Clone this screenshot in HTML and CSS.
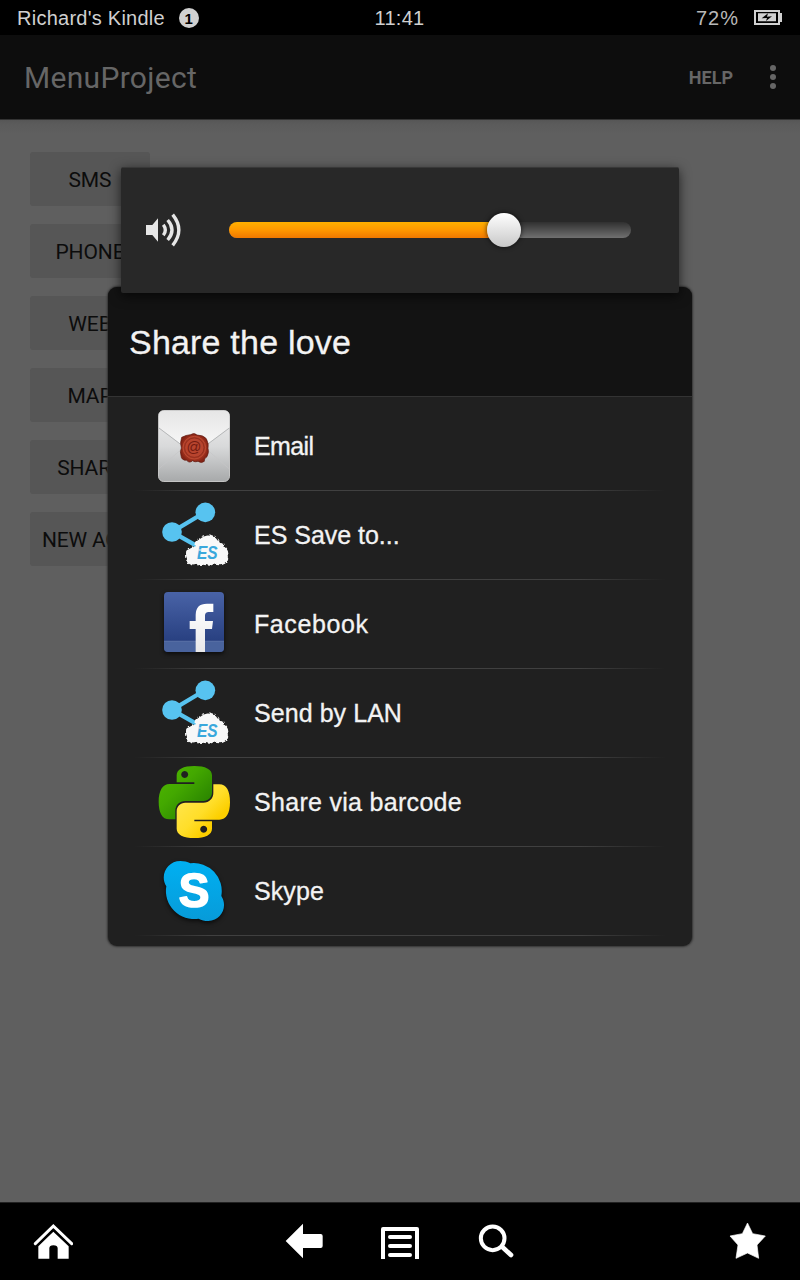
FILE: index.html
```html
<!DOCTYPE html>
<html lang="en">
<head>
<meta charset="utf-8">
<title>MenuProject</title>
<link rel="stylesheet" href="styles.css">
</head>
<body>
<div class="screen">
  <div class="status">
    <div class="device">Richard's Kindle <span class="count">1</span></div>
    <div class="clock">11:41</div>
    <div class="power">72%
      <svg class="battery" viewBox="1062 30 84 45"><path d="M1065 33H1137V72H1065Z" fill="none" stroke="#d0d0d0" stroke-width="6"/><path d="M1140 39h6v27h-6zM1074 40h54v24h-54z" fill="#d0d0d0"/><path d="M1085 55l19-15-3 10 15-1-18 14 3-9z" fill="#000"/></svg>
    </div>
  </div>
  <header class="appbar">
    <h1 class="apptitle">MenuProject</h1>
    <span class="help">HELP</span>
    <svg class="more" viewBox="0 0 6 24"><g fill="#666"><circle cx="3" cy="3" r="3"/><circle cx="3" cy="12" r="3"/><circle cx="3" cy="21" r="3"/></g></svg>
  </header>
  <main class="content">
    <div class="btn">SMS</div>
    <div class="btn">PHONE</div>
    <div class="btn">WEB</div>
    <div class="btn">MAP</div>
    <div class="btn">SHARE</div>
    <div class="btn btn-long">NEW ACT</div>
  </main>
  <nav class="nav">
    <svg class="navicon" viewBox="99 93 120 120"><path d="M106 161L160 108L215 161" fill="none" stroke="#fff" stroke-width="9" stroke-linecap="round"/><path d="M115 169L160 125L206 169V206H173V175Q173 166 160 166Q148 166 148 175V206H115Z" fill="#fff"/></svg>
    <div class="navmid">
      <svg class="navicon" viewBox="852 93 120 120"><path d="M857 153L909 101V132H962Q968 132 968 138V168Q968 174 962 174H909V205Z" fill="#fff"/></svg>
      <svg class="navicon" viewBox="1140 93 120 120"><path d="M1149 207V117H1251V207" fill="none" stroke="#fff" stroke-width="12" stroke-linejoin="round"/><path d="M1170 141h60M1170 168h60M1170 195h60" stroke="#fff" stroke-width="12" stroke-linecap="round"/></svg>
      <svg class="navicon" viewBox="228 93 120 120"><circle cx="278" cy="145" r="35.500" fill="none" stroke="#fff" stroke-width="12"/><path d="M307 171L333 195" stroke="#fff" stroke-width="14" stroke-linecap="round"/></svg>
    </div>
    <svg class="navicon" viewBox="981 93 120 120"><path d="M1042.500 99L1058 131L1096 138L1071 165L1076 205L1042.500 189L1008 205L1014 165L990 138L1027 131Z" fill="#fff" stroke="#fff" stroke-width="2" stroke-linejoin="round"/></svg>
  </nav>

  <section class="dialog">
    <h2 class="dialogtitle">Share the love</h2>
    <div class="list">
      <div class="row">
        <svg class="icon" viewBox="54 30 216 216">
          <defs>
            <linearGradient id="paper" x2="0" y2="1"><stop stop-color="#eee"/><stop offset=".5" stop-color="#d9dadb"/><stop offset="1" stop-color="#a7a9aa"/></linearGradient>
            <linearGradient id="flap" x2="0" y2="1"><stop stop-color="#e6e6e6"/><stop offset="1" stop-color="#fafafa"/></linearGradient>
            <radialGradient id="wax"><stop stop-color="#cf5136"/><stop offset=".65" stop-color="#b53d27"/><stop offset="1" stop-color="#852314"/></radialGradient>
          </defs>
          <rect x="55.500" y="31.500" width="213" height="213" rx="16" fill="url(#paper)" stroke="#c4c4c4" stroke-width="3"/>
          <path d="M57 206L130 143M267 206L194 143" stroke="#c5c6c7" stroke-width="2"/>
          <path d="M57 83L147 151Q162 162 177 151L268 83V48Q268 32 252 32H73Q57 32 57 48Z" fill="url(#flap)"/>
          <path d="M57 84L147 152Q162 163 177 152L268 84" fill="none" stroke="#b5b7b8" stroke-width="3"/>
          <path d="M125 112Q138 105 151 104Q163 97 171 105Q190 105 199 116Q207 131 204 145Q208 157 201 170Q191 176 193 184Q184 191 174 184Q164 188 158 182Q148 191 140 181Q124 181 123 167Q119 154 124 144Q119 128 125 112Z" fill="url(#wax)" stroke="#5d1a10" stroke-width="2"/>
          <circle cx="163" cy="143" r="34" fill="#a93823" stroke="#c4543b" stroke-width="2"/>
          <circle cx="163" cy="143" r="29" fill="#b8442e" stroke="#842719" stroke-width="2"/>
          <text class="seal" x="162" y="157" text-anchor="middle">@</text>
        </svg>
        <span class="label email">Email</span>
      </div>
      <div class="row">
        <svg class="icon" viewBox="54 297 216 216">
          <defs><filter id="fuzz" x="-20%" y="-20%" width="140%" height="140%"><feTurbulence baseFrequency=".08" numOctaves="2" seed="4"/><feDisplacementMap in="SourceGraphic" scale="8" xChannelSelector="R" yChannelSelector="G"/><feGaussianBlur stdDeviation="2"/></filter></defs>
          <g id="es">
            <path d="M196 336L96 396L178 442" fill="none" stroke="#57c3f0" stroke-width="13"/>
            <circle cx="196" cy="337" r="29.500" fill="#57c3f0"/><circle cx="96" cy="396" r="29.500" fill="#57c3f0"/>
            <path d="M144 488Q130 467 137 448Q154 439 164 436Q161 421 176 415Q190 401 211 404Q231 408 237 427Q251 423 251 438Q267 450 260 467Q265 481 255 488Q240 497 218 490Q207 497 195 492Q182 498 169 491Q156 497 144 488Z" fill="#f8f8f8" filter="url(#fuzz)"/>
            <text class="eslogo" x="171" y="476" textLength="62" lengthAdjust="spacingAndGlyphs">ES</text>
            <path d="M176 450h24" stroke="#f8f8f8" stroke-width="3"/>
          </g>
        </svg>
        <span class="label es">ES Save to...</span>
      </div>
      <div class="row">
        <svg class="icon shade" viewBox="54 24 216 216">
          <defs><linearGradient id="fb" x2="0" y2="1"><stop stop-color="#4963a7"/><stop offset="1" stop-color="#213878"/></linearGradient><linearGradient id="fbw" x2="0" y2="1"><stop stop-color="#fff"/><stop offset="1" stop-color="#e8e8ea"/></linearGradient></defs>
          <rect x="72" y="36" width="180" height="180" rx="12" fill="url(#fb)"/>
          <path d="M72 183H252V204Q252 216 240 216H84Q72 216 72 204Z" fill="#49639d"/><path d="M72 183.500H252" stroke="#6379ad" stroke-width="2"/>
          <path d="M167 216V147H149V123H167V105Q167 71 201 71H220V96H206Q195 96 195 107V123H219L216 147H195V216Z" fill="url(#fbw)"/>
        </svg>
        <span class="label facebook">Facebook</span>
      </div>
      <div class="row">
        <svg class="icon" viewBox="54 297 216 216"><use href="#es"/></svg>
        <span class="label lan">Send by LAN</span>
      </div>
      <div class="row">
        <svg class="icon" viewBox="54 33 216 216">
          <defs><linearGradient id="green" x2="1" y2="1"><stop stop-color="#50b900"/><stop offset=".4" stop-color="#43a800"/><stop offset=".9" stop-color="#257c00"/></linearGradient><linearGradient id="yellow" x2="1" y2="1"><stop offset=".15" stop-color="#ffe64d"/><stop offset=".5" stop-color="#ffde29"/><stop offset=".7" stop-color="#fccf00"/></linearGradient></defs>
          <path fill="url(#green)" fill-rule="evenodd" d="M110 82V61C110 43 130 33 163 33C196 33 216 43 216 61V112C216 128 205 138 190 138H136C118 138 106 151 106 167V193H88C66 193 56 172 56 140C56 108 67 87 89 87H163V82ZM134 48a10.500 10.500 0 1 0 .1 0Z"/>
          <path fill="url(#yellow)" fill-rule="evenodd" d="M216 199V221C216 239 196 249 163 249C130 249 110 239 110 221V169C110 154 121 143 136 143H190C208 143 220 130 220 114V88H238C260 88 270 109 270 141C270 174 259 194 238 194H163V199ZM191 212a10.500 10.500 0 1 0 .1 0Z"/>
        </svg>
        <span class="label">Share via barcode</span>
      </div>
      <div class="row">
        <svg class="icon shade" viewBox="54 300 216 216">
          <defs><linearGradient id="sky" x2="0" y2="1"><stop stop-color="#00b0f2"/><stop offset="1" stop-color="#079bd9"/></linearGradient></defs>
          <path d="M151 325A84 84 0 0 1 244 423C265 456 243 497 205 498C194 498 184 496 176 491A84 84 0 0 1 79 394C58 360 82 318 121 318C132 318 142 320 151 325Z" fill="url(#sky)"/>
          <text class="skype" x="162" y="457" text-anchor="middle" textLength="92" lengthAdjust="spacingAndGlyphs">S</text>
        </svg>
        <span class="label skypelabel">Skype</span>
      </div>
    </div>
  </section>

  <section class="volume">
    <svg class="speaker" viewBox="435 249 111 102"><path d="M438 285h19l17-20v70l-17-20h-19z" fill="#e6e6e6"/><g fill="none" stroke="#e6e6e6" stroke-width="10"><path d="M490 284Q502 300 490 316"/><path d="M503 270Q529 300 503 330"/><path d="M518 254Q555 300 518 346"/></g></svg>
    <div class="track"><div class="fill"></div><div class="thumb"></div></div>
  </section>
</div>
</body>
</html>
```
FILE: styles.css
```css
* { box-sizing: border-box; }
body { margin: 0; background: #000; }
.screen {
  position: relative;
  width: 800px;
  height: 1280px;
  overflow: hidden;
  display: flex;
  flex-direction: column;
  background: #5f5f5f;
  font-family: "Liberation Sans", Arial, sans-serif;
}
.status {
  height: 35px;
  flex: none;
  display: grid;
  grid-template-columns: 1fr auto 1fr;
  align-items: center;
  padding: 1px 18px 0 17px;
  background: #000;
  color: #d0d0d0;
  font-size: 20px;
  letter-spacing: .25px;
}
.device { display: flex; align-items: center; gap: 14px; }
.count {
  width: 20px;
  height: 20px;
  border-radius: 50%;
  background: #d0d0d0;
  color: #000;
  font-size: 15px;
  font-weight: bold;
  line-height: 21px;
  text-align: center;
  margin-top: -1px;
}
.power { display: flex; justify-content: flex-end; align-items: center; gap: 15px; letter-spacing: 1px; color: #b8b8b8; }
.battery { width: 28px; height: 15px; margin-top: -1px; }
.appbar {
  height: 84px;
  flex: none;
  display: flex;
  align-items: center;
  padding: 0 24px;
  background: #0d0d0d;
  color: #666;
  font-family: Roboto, sans-serif;
}
.apptitle { margin: 0 auto 0 0; font-size: 30px; font-weight: 400; letter-spacing: .3px; }
.help { font-size: 18px; font-weight: 700; margin: 1px 37px 0 0; }
.more { width: 6px; height: 24px; }
.content {
  flex: 1;
  display: flex;
  flex-direction: column;
  align-items: flex-start;
  gap: 18px;
  padding: 32px 30px;
  border-top: 1px solid #333;
  background: linear-gradient(#565656, #5b5b5b 4px, #5f5f5f 14px);
}
.btn {
  width: 120px;
  height: 54px;
  border-radius: 3px;
  background: #565656;
  color: #0c0c0c;
  font: 21px/56px Roboto, sans-serif;
  text-align: center;
  letter-spacing: -.1px;
  white-space: nowrap;
}
.btn-long { text-align: left; padding-left: 12px; letter-spacing: -.2px; }
.nav {
  height: 78px;
  flex: none;
  display: flex;
  justify-content: space-between;
  padding: 18px 33px 0;
  background: #000;
  border-top: 1px solid #222;
}
.navicon { width: 40px; height: 40px; }
.navmid { display: flex; gap: 56px; }
.dialog {
  position: absolute;
  left: 108px;
  top: 287px;
  width: 584px;
  height: 659px;
  border-radius: 9px;
  overflow: hidden;
  background: #202020;
  color: #f3f3f3;
  box-shadow: 0 0 2px 1px #333;
}
.dialogtitle {
  height: 110px;
  margin: 0;
  padding: 0 21px;
  border-bottom: 1px solid #333;
  background: #131313;
  font-size: 34px;
  font-weight: 400;
  line-height: 110px;
  letter-spacing: .2px;
  -webkit-text-stroke: .3px #f3f3f3;
}
.list { padding: 5px 26px 0; }
.row {
  height: 89px;
  display: flex;
  align-items: center;
  gap: 24px;
  padding: 0 24px 1px;
  background: linear-gradient(90deg, transparent, #404040 14%, #404040 84%, transparent) bottom / 100% 1px no-repeat;
}
.icon { width: 72px; height: 72px; overflow: visible; }
.shade { filter: drop-shadow(0 2px 2px #000a); }
.label { font-size: 25px; letter-spacing: .3px; -webkit-text-stroke: .3px #f3f3f3; }
.email { letter-spacing: -.6px; }
.es { letter-spacing: -.02px; }
.facebook { letter-spacing: .6px; }
.lan { letter-spacing: .06px; }
.skypelabel { letter-spacing: .1px; }
.seal { font: 44px "Liberation Sans", sans-serif; fill: #741b10; }
.eslogo { font: italic bold 56px "Liberation Sans", sans-serif; fill: #3aa8dc; }
.skype { font: bold 142px "Liberation Sans", sans-serif; fill: #fff; stroke: #fff; stroke-width: 5px; stroke-linejoin: round; }
.volume {
  position: absolute;
  left: 121px;
  top: 167px;
  width: 558px;
  height: 126px;
  display: flex;
  align-items: center;
  gap: 47px;
  padding: 0 48px 1px 24px;
  border-radius: 2px;
  border-top: 1px solid #383838;
  background: #282828;
  box-shadow: 0 3px 12px #000a;
}
.speaker { width: 37px; height: 34px; }
.track {
  width: 402px;
  height: 16px;
  display: flex;
  align-items: center;
  border-radius: 8px;
  background: linear-gradient(#303030, #707070);
}
.fill { width: 275px; height: 16px; border-radius: 8px 0 0 8px; background: linear-gradient(#ffb000, #ff9800 50%, #f07800); }
.thumb { flex: none; width: 34px; height: 34px; margin-left: -17px; border-radius: 50%; background: linear-gradient(#fff, #c8c8c8); box-shadow: 0 0 5px #000b; }
```
